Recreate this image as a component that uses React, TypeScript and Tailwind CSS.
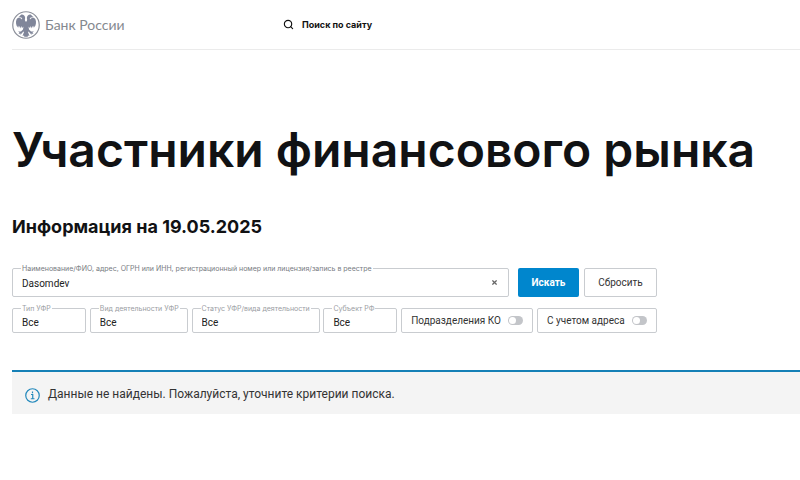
import { useState } from 'react';
import { Search } from 'lucide-react';

const filters = [
    { id: 'type', label: 'Тип УФР', width: 'w-[74px]' },
    { id: 'activity', label: 'Вид деятельности УФР', width: 'w-[98px]' },
    { id: 'status', label: 'Статус УФР/вида деятельности', width: 'w-[128px]' },
    { id: 'region', label: 'Субъект РФ', width: 'w-[74px]' },
];

const toggles = [
    { id: 'branches', label: 'Подразделения КО', width: 'w-[132px]' },
    { id: 'address', label: 'С учетом адреса', width: 'w-[120px]' },
];

const wing =
    'M28 22l-2-3c-1-2 1-4 0-7-1-3-3-5-6-5-2 0-3 1-4 3l-3 2 5 1c2 0 3 2 2 4-4-5-9-4-11 0-2 5-1 11 2 16l1-4 2 5 1-4 3 5 1-5 2 4 2-3-1 6-4 4-6 0 3 2-2 3 4-1 0 3 3-4 3-3 1 1-3 8 3-1 1 3 3-1 1 2z';

function Eagle() {
    return (
        <svg viewBox="0 0 56 56" className="size-7" aria-hidden="true">
            <circle cx="28" cy="28" r="26.5" fill="none" stroke="#8b8f99" strokeWidth="2.4" />
            <g fill="#80869a">
                <path d={wing} />
                <path d={wing} transform="matrix(-1 0 0 1 56 0)" />
            </g>
        </svg>
    );
}

function Header() {
    return (
        <header className="flex h-[50px] items-center border-b border-[#ebebeb]">
            <a href="#" className="flex w-[271px] items-center gap-[5px]">
                <Eagle />
                <span className="font-['Lato',sans-serif] text-[14px] text-[#85898f]">Банк России</span>
            </a>
            <button type="button" className="flex items-center gap-2 text-[9px] font-bold text-[#111]">
                <Search className="size-[11px]" strokeWidth={2.5} />
                Поиск по сайту
            </button>
        </header>
    );
}

function SearchForm() {
    const [query, setQuery] = useState('Dasomdev');

    return (
        <form
            className="mt-[29px] flex max-w-[645px] flex-col gap-[11px] font-['Roboto',sans-serif]"
            onSubmit={(e) => e.preventDefault()}
        >
            <div className="flex h-[29px]">
                <div className="relative flex-1 rounded-[2px] border border-[#c9ccd0]">
                    <label
                        htmlFor="query"
                        className="absolute -top-1 left-2 bg-white px-px font-['Inter',sans-serif] text-[7px] leading-[8px] whitespace-nowrap text-[#777b82]"
                    >
                        Наименование/ФИО, адрес, ОГРН или ИНН, регистрационный номер или лицензия/запись в реестре
                    </label>
                    <input
                        id="query"
                        value={query}
                        onChange={(e) => setQuery(e.target.value)}
                        className="size-full bg-transparent pt-px pr-7 pl-[9px] text-[10px] text-[#222] outline-none"
                    />
                    <button
                        type="button"
                        aria-label="Очистить"
                        onClick={() => setQuery('')}
                        className="absolute inset-y-0 right-2 flex w-3 items-center justify-center"
                    >
                        <svg viewBox="0 0 6 6" className="size-[5px]" fill="none" stroke="#666" strokeWidth="1.5">
                            <path d="M.5.5l5 5M5.5.5l-5 5" />
                        </svg>
                    </button>
                </div>
                <button type="submit" className="ml-[9px] w-[61px] rounded-[2px] bg-[#0086cd] text-[10px] font-bold text-white">
                    Искать
                </button>
                <button type="reset" className="ml-[5px] w-[73px] rounded-[2px] border border-[#c9ccd0] text-[10px] text-[#333]">
                    Сбросить
                </button>
            </div>

            <div className="flex flex-wrap justify-between gap-y-3">
                {filters.map((f) => (
                    <div key={f.id} className={`relative h-[25px] rounded-[2px] border border-[#c9ccd0] ${f.width}`}>
                        <label
                            htmlFor={f.id}
                            className="absolute -top-1 left-2 bg-white px-px font-['Inter',sans-serif] text-[7px] leading-[8px] whitespace-nowrap text-[#9a9da3]"
                        >
                            {f.label}
                        </label>
                        <select id={f.id} className="size-full appearance-none bg-transparent pl-[9px] text-[10px] text-[#222] outline-none">
                            <option>Все</option>
                        </select>
                    </div>
                ))}
                {toggles.map((t) => (
                    <label
                        key={t.id}
                        className={`flex h-[25px] items-center justify-between rounded-[2px] border border-[#c9ccd0] px-[9px] text-[10px] whitespace-nowrap text-[#333] ${t.width}`}
                    >
                        {t.label}
                        <input
                            type="checkbox"
                            className="flex h-[9px] w-[15px] appearance-none items-center rounded-full bg-[#c3c5c9] px-px before:size-[7px] before:rounded-full before:bg-white checked:justify-end checked:bg-[#0086cd]"
                        />
                    </label>
                ))}
            </div>
        </form>
    );
}

function Notice() {
    return (
        <div role="status" className="mt-[37px] flex h-11 items-center gap-2 border-t-2 border-[#1580b6] bg-[#f4f4f4] px-[13px]">
            <svg viewBox="0 0 30 30" className="mt-1 size-[15px]" fill="none" stroke="#2389bc" strokeWidth="2.4" aria-hidden="true">
                <circle cx="15" cy="15" r="13.5" />
                <path d="M12 13h3.5v8M11.5 21.5h7.500M15 7v3.500" />
            </svg>
            <p className="pt-px font-['Roboto',sans-serif] text-[12px] text-[#333]">
                Данные не найдены. Пожалуйста, уточните критерии поиска.
            </p>
        </div>
    );
}

export default function App() {
    return (
        <div className="min-h-screen bg-white pl-3 font-['Inter','Liberation_Sans',sans-serif]">
            <Header />
            <main>
                <h1 className="mt-[70px] text-[48px] leading-[60px] font-semibold whitespace-nowrap text-[#111214]">
                    Участники финансового рынка
                </h1>
                <h2 className="mt-[35px] text-[18px] leading-6 font-bold text-[#111214]">Информация на 19.05.2025</h2>
                <SearchForm />
                <Notice />
            </main>
        </div>
    );
}
